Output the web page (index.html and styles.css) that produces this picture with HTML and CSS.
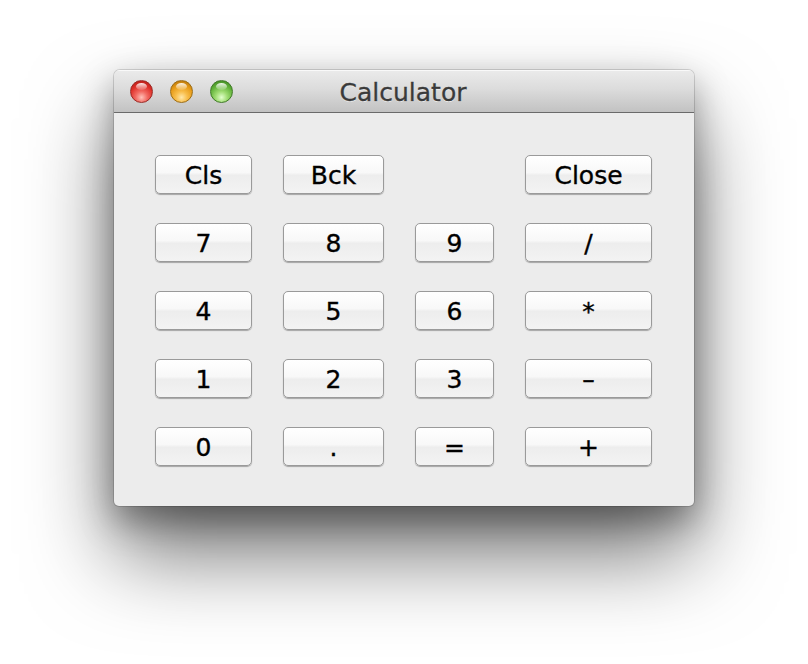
FILE: index.html
```html
<!DOCTYPE html>
<html>
<head>
<meta charset="utf-8">
<title>Calculator</title>
<link rel="stylesheet" href="styles.css">
</head>
<body>
<div class="window">
  <div class="titlebar">
    <div class="lights">
      <span class="light red"></span>
      <span class="light yellow"></span>
      <span class="light green"></span>
    </div>
    <div class="title">Calculator</div>
  </div>
  <div class="content">
    <div class="keys">
      <button class="key">Cls</button>
      <button class="key">Bck</button>
      <span class="blank"></span>
      <button class="key">Close</button>
      <button class="key">7</button>
      <button class="key">8</button>
      <button class="key">9</button>
      <button class="key">/</button>
      <button class="key">4</button>
      <button class="key">5</button>
      <button class="key">6</button>
      <button class="key">*</button>
      <button class="key">1</button>
      <button class="key">2</button>
      <button class="key">3</button>
      <button class="key">–</button>
      <button class="key">0</button>
      <button class="key">.</button>
      <button class="key">=</button>
      <button class="key">+</button>
    </div>
  </div>
</div>
</body>
</html>
```

FILE: styles.css
```css
html, body {
  margin: 0;
  padding: 0;
  background: #ffffff;
}
body {
  width: 808px;
  height: 664px;
  overflow: hidden;
  font-family: "DejaVu Sans", "Liberation Sans", sans-serif;
  padding-top: 70px;
  box-sizing: border-box;
}
.window {
  margin-left: 114px;
  width: 580px;
  height: 436px;
  border-radius: 6px 6px 5px 5px;
  background: #ececec;
  box-shadow: 0 48px 86px rgba(0, 0, 0, 0.55), 0 14px 34px rgba(0, 0, 0, 0.35), 0 0 0 1px rgba(0, 0, 0, 0.14);
  display: flex;
  flex-direction: column;
  overflow: hidden;
}
.titlebar {
  height: 42px;
  flex: none;
  position: relative;
  background: linear-gradient(#ebebeb 0%, #dcdcdc 45%, #c2c2c2 100%);
  border-bottom: 1px solid #6a6a6a;
  box-shadow: inset 0 1px 0 rgba(255, 255, 255, 0.7);
  display: flex;
  align-items: center;
  justify-content: center;
}
.lights {
  position: absolute;
  left: 16px;
  top: 10px;
  display: flex;
  gap: 17px;
}
.light {
  position: relative;
  width: 23px;
  height: 23px;
  border-radius: 50%;
  box-sizing: border-box;
}
.light::after {
  content: "";
  position: absolute;
  left: 5px;
  top: 2px;
  width: 11px;
  height: 7px;
  border-radius: 50%;
  background: linear-gradient(rgba(255, 255, 255, 0.9), rgba(255, 255, 255, 0.1));
}
.red {
  background: radial-gradient(circle at 50% 78%, #ffc0b8 0%, #f26a62 30%, #de2f28 62%, #a8150f 100%);
  border: 1px solid #9a2a26;
}
.yellow {
  background: radial-gradient(circle at 50% 78%, #ffe7a8 0%, #f8bd4a 30%, #e69a16 62%, #a36608 100%);
  border: 1px solid #9c6d16;
}
.green {
  background: radial-gradient(circle at 50% 78%, #e2ffcc 0%, #9fdc72 30%, #62b23a 62%, #337a18 100%);
  border: 1px solid #3f7a27;
}
.title {
  font-size: 25px;
  color: #3a3a3a;
  -webkit-text-stroke: 0.3px #3a3a3a;
  text-shadow: 0 1px 0 rgba(255, 255, 255, 0.6);
  line-height: 1;
  margin-top: 2px;
  margin-left: -2px;
}
.content {
  flex: 1;
  padding: 42px 0 0 41px;
}
.keys {
  display: grid;
  grid-template-columns: 97px 101px 79px 127px;
  grid-auto-rows: 39px;
  column-gap: 31px;
  row-gap: 29px;
}
.key {
  font-family: "DejaVu Sans", "Liberation Sans", sans-serif;
  font-size: 25px;
  color: #000;
  -webkit-text-stroke: 0.35px #000;
  padding: 1px 0 0 0;
  margin: 0;
  line-height: 1;
  border: 1px solid #9a9a9a;
  border-radius: 5px;
  background: linear-gradient(#ffffff 0%, #f8f8f8 45%, #ededed 52%, #f3f3f3 100%);
  box-shadow: 0 1px 1px rgba(0, 0, 0, 0.3);
  height: 39px;
}
```
